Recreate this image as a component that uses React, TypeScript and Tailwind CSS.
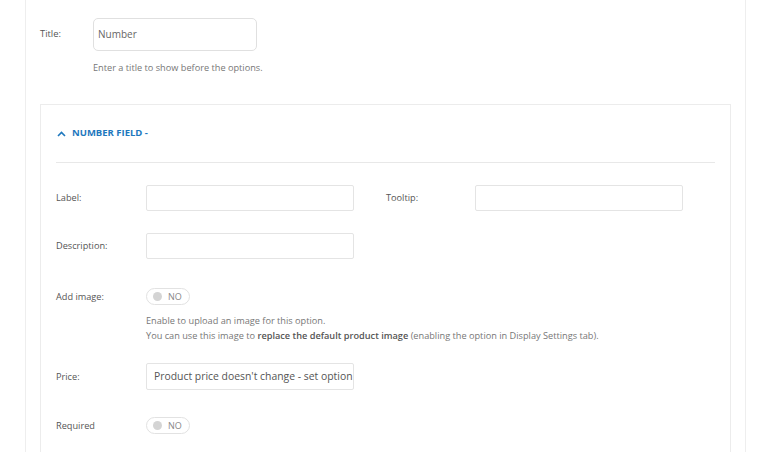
import React from "react";

const font = { fontFamily: '"Open Sans", "Noto Sans", sans-serif' };

function Toggle() {
  return (
    <div className="flex items-center w-[44px] h-[17px] rounded-full border border-[#e2e2e2] bg-white pl-[6px]">
      <span className="w-[9px] h-[9px] rounded-full bg-[#d4d4d4]" />
      <span className="ml-[6px] text-[9px] leading-none text-[#888]">NO</span>
    </div>
  );
}

function Input({ value, className = "" }: { value?: string; className?: string }) {
  return (
    <div
      className={
        "w-[208px] h-[26px] border border-[#e4e4e4] rounded-[2px] bg-white flex items-center px-[7px] text-[10.4px] text-[#555] whitespace-nowrap overflow-hidden " +
        className
      }
    >
      {value}
    </div>
  );
}

export default function App() {
  return (
    <div className="w-[769px] h-[452px] bg-white overflow-hidden text-[#555]" style={font}>
      <div className="ml-[25px] w-[721px] h-[452px] border-x border-[#eeeeee] pl-[14px] pr-[14px] pt-[18px]">
        <div className="flex items-center">
          <div className="w-[53px] text-[9.4px] text-[#555]">Title:</div>
          <div className="w-[164px] h-[33px] rounded-[5px] border border-[#e0e0e0] flex items-center px-[4px] text-[10px] text-[#666]">
            Number
          </div>
        </div>
        <div className="ml-[53px] mt-[10px] text-[9.2px] leading-[14px] text-[#777]">
          Enter a title to show before the options.
        </div>

        <div className="mt-[29px] border border-[#ececec] px-[15px]">
          <div className="h-[58px] flex items-center border-b border-[#e8e8e8]">
            <svg width="9" height="6" viewBox="0 0 9 6" className="ml-[1px]">
              <path d="M1 5 L4.5 1.5 L8 5" fill="none" stroke="#1e78be" strokeWidth="1.6" />
            </svg>
            <span className="ml-[6px] text-[9.5px] font-bold text-[#1e78be]">NUMBER FIELD -</span>
          </div>

          <div className="flex items-center mt-[22px]">
            <div className="w-[90px] text-[9.2px]">Label:</div>
            <Input />
            <div className="ml-[32px] w-[89px] text-[9.2px]">Tooltip:</div>
            <Input />
          </div>

          <div className="flex items-center mt-[22px]">
            <div className="w-[90px] text-[9.2px]">Description:</div>
            <Input />
          </div>

          <div className="flex items-center mt-[29px]">
            <div className="w-[90px] text-[9.2px]">Add image:</div>
            <Toggle />
          </div>
          <div className="ml-[90px] mt-[8px] text-[9.2px] leading-[15px] text-[#777]">
            <div>Enable to upload an image for this option.</div>
            <div>
              You can use this image to{" "}
              <span className="font-semibold text-[#555]">replace the default product image</span> (enabling the
              option in Display Settings tab).
            </div>
          </div>

          <div className="flex items-center mt-[20px]">
            <div className="w-[90px] text-[9.2px]">Price:</div>
            <Input value="Product price doesn't change - set option" className="h-[27px]" />
          </div>

          <div className="flex items-center mt-[27px] pb-[40px]">
            <div className="w-[90px] text-[9.2px]">Required</div>
            <Toggle />
          </div>
        </div>
      </div>
    </div>
  );
}
